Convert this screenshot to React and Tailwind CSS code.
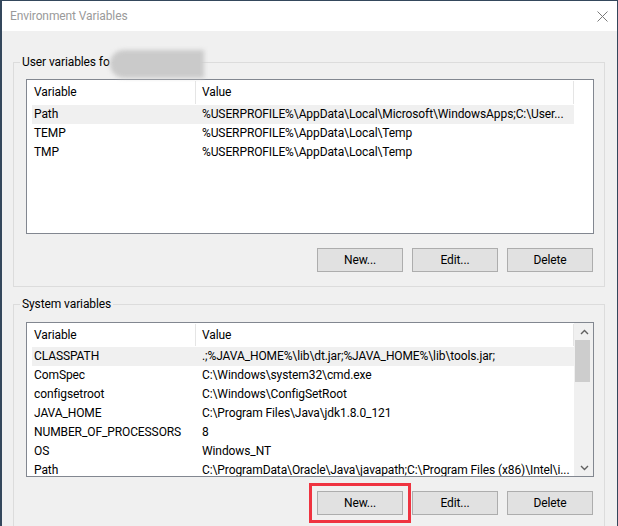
import React from "react";

const userVars = [
  ["Path", "%USERPROFILE%\\AppData\\Local\\Microsoft\\WindowsApps;C:\\User..."],
  ["TEMP", "%USERPROFILE%\\AppData\\Local\\Temp"],
  ["TMP", "%USERPROFILE%\\AppData\\Local\\Temp"],
];

const sysVars = [
  ["CLASSPATH", ".;%JAVA_HOME%\\lib\\dt.jar;%JAVA_HOME%\\lib\\tools.jar;"],
  ["ComSpec", "C:\\Windows\\system32\\cmd.exe"],
  ["configsetroot", "C:\\Windows\\ConfigSetRoot"],
  ["JAVA_HOME", "C:\\Program Files\\Java\\jdk1.8.0_121"],
  ["NUMBER_OF_PROCESSORS", "8"],
  ["OS", "Windows_NT"],
  ["Path", "C:\\ProgramData\\Oracle\\Java\\javapath;C:\\Program Files (x86)\\Intel\\i..."],
];

function Header({ tall }) {
  const h = tall ? "h-[25px] leading-[25px]" : "h-[24px] leading-[24px]";
  return (
    <div className={"flex shrink-0 items-stretch bg-white " + h}>
      <div className="w-[163px] pl-[2px]">Variable</div>
      <div className="my-[1px] w-px bg-[#e5e5e5]" />
      <div className="w-[377px] pl-[6px]">Value</div>
      <div className="my-[1px] w-px bg-[#e5e5e5]" />
    </div>
  );
}

function Rows({ rows }) {
  return rows.map(([k, v], i) => (
    <div
      key={k + i}
      className={
        "flex h-[19px] w-[542px] shrink-0 leading-[19px] " +
        (i === 0 ? "bg-[#f0f0f0]" : "")
      }
    >
      <div className="w-[164px] shrink-0 overflow-hidden whitespace-nowrap pl-[2px]">{k}</div>
      <div className="flex-1 overflow-hidden whitespace-nowrap pl-[6px]">{v}</div>
    </div>
  ));
}

function Chevron({ up }) {
  return (
    <svg width="9" height="6" viewBox="0 0 9 6" className="block">
      <polyline
        points={up ? "1,5 4.5,1.5 8,5" : "1,1 4.5,4.5 8,1"}
        fill="none"
        stroke="#606060"
        strokeWidth="1.4"
      />
    </svg>
  );
}

function ListBox({ rows, height, scroll, tall }) {
  return (
    <div
      className={
        "ml-[6px] flex w-[568px] overflow-hidden border border-[#828790] bg-white " + height
      }
    >
      <div className="flex w-[547px] flex-col overflow-hidden pl-[5px]">
        <Header tall={tall} />
        <Rows rows={rows} />
      </div>
      {scroll ? (
        <div className="flex w-[19px] flex-col bg-[#f0f0f0]">
          <div className="flex h-[17px] items-center justify-center pl-[1px]">
            <Chevron up />
          </div>
          <div className="ml-[1px] h-[42px] w-[15px] bg-[#cdcdcd]" />
          <div className="flex-1" />
          <div className="flex h-[17px] items-center justify-center pl-[1px]">
            <Chevron />
          </div>
        </div>
      ) : null}
    </div>
  );
}

function Btn({ children }) {
  return (
    <div className="flex h-[24px] w-[86px] items-center justify-center border border-[#adadad] bg-[#e1e1e1] text-black">
      {children}
    </div>
  );
}

function Buttons({ highlight }) {
  return (
    <div className="ml-[6px] flex w-[568px] justify-end gap-[9px] pr-[1px]">
      <div className="relative">
        <Btn>New...</Btn>
        {highlight ? (
          <div className="pointer-events-none absolute -inset-[8px] border-[3px] border-[#ef3340]" />
        ) : null}
      </div>
      <Btn>Edit...</Btn>
      <Btn>Delete</Btn>
    </div>
  );
}

export default function App() {
  return (
    <div className="h-[526px] w-[618px] overflow-hidden border-l-2 border-r border-t border-[#34475c] bg-[#f0f0f0] font-['Roboto',sans-serif] text-[12px] tracking-[-0.1px] text-black">
      <div className="flex h-[30px] items-center justify-between bg-white pl-[8px] pr-[9px]">
        <span className="text-[12px] text-[#9a9a9a]">Environment Variables</span>
        <svg width="11" height="11" viewBox="0 0 11 11" className="block">
          <path d="M0.5 0.5 L10.5 10.5 M10.5 0.5 L0.5 10.5" stroke="#7a7a7a" strokeWidth="1" fill="none" />
        </svg>
      </div>
      <div className="pl-[11px] pt-[23px]">
        <fieldset className="w-[592px] border border-[#dcdcdc] pb-[14px] pl-[6px] pt-[9px]">
          <legend className="px-[2px] leading-[16px]">
            <span className="relative">
              User variables fo
              <span className="absolute left-full top-[-5px] h-[28px] w-[94px] rounded-l-[14px] bg-[#cacaca] blur-[2px]" />
            </span>
          </legend>
          <ListBox rows={userVars} height="h-[155px]" tall />
          <div className="h-[14px]" />
          <Buttons />
        </fieldset>
        <fieldset className="mt-[9px] w-[592px] border border-[#dcdcdc] pb-[14px] pl-[6px] pt-[10px]">
          <legend className="px-[2px] leading-[16px]">System variables</legend>
          <ListBox rows={sysVars} height="h-[155px]" scroll />
          <div className="h-[14px]" />
          <Buttons highlight />
        </fieldset>
      </div>
    </div>
  );
}
